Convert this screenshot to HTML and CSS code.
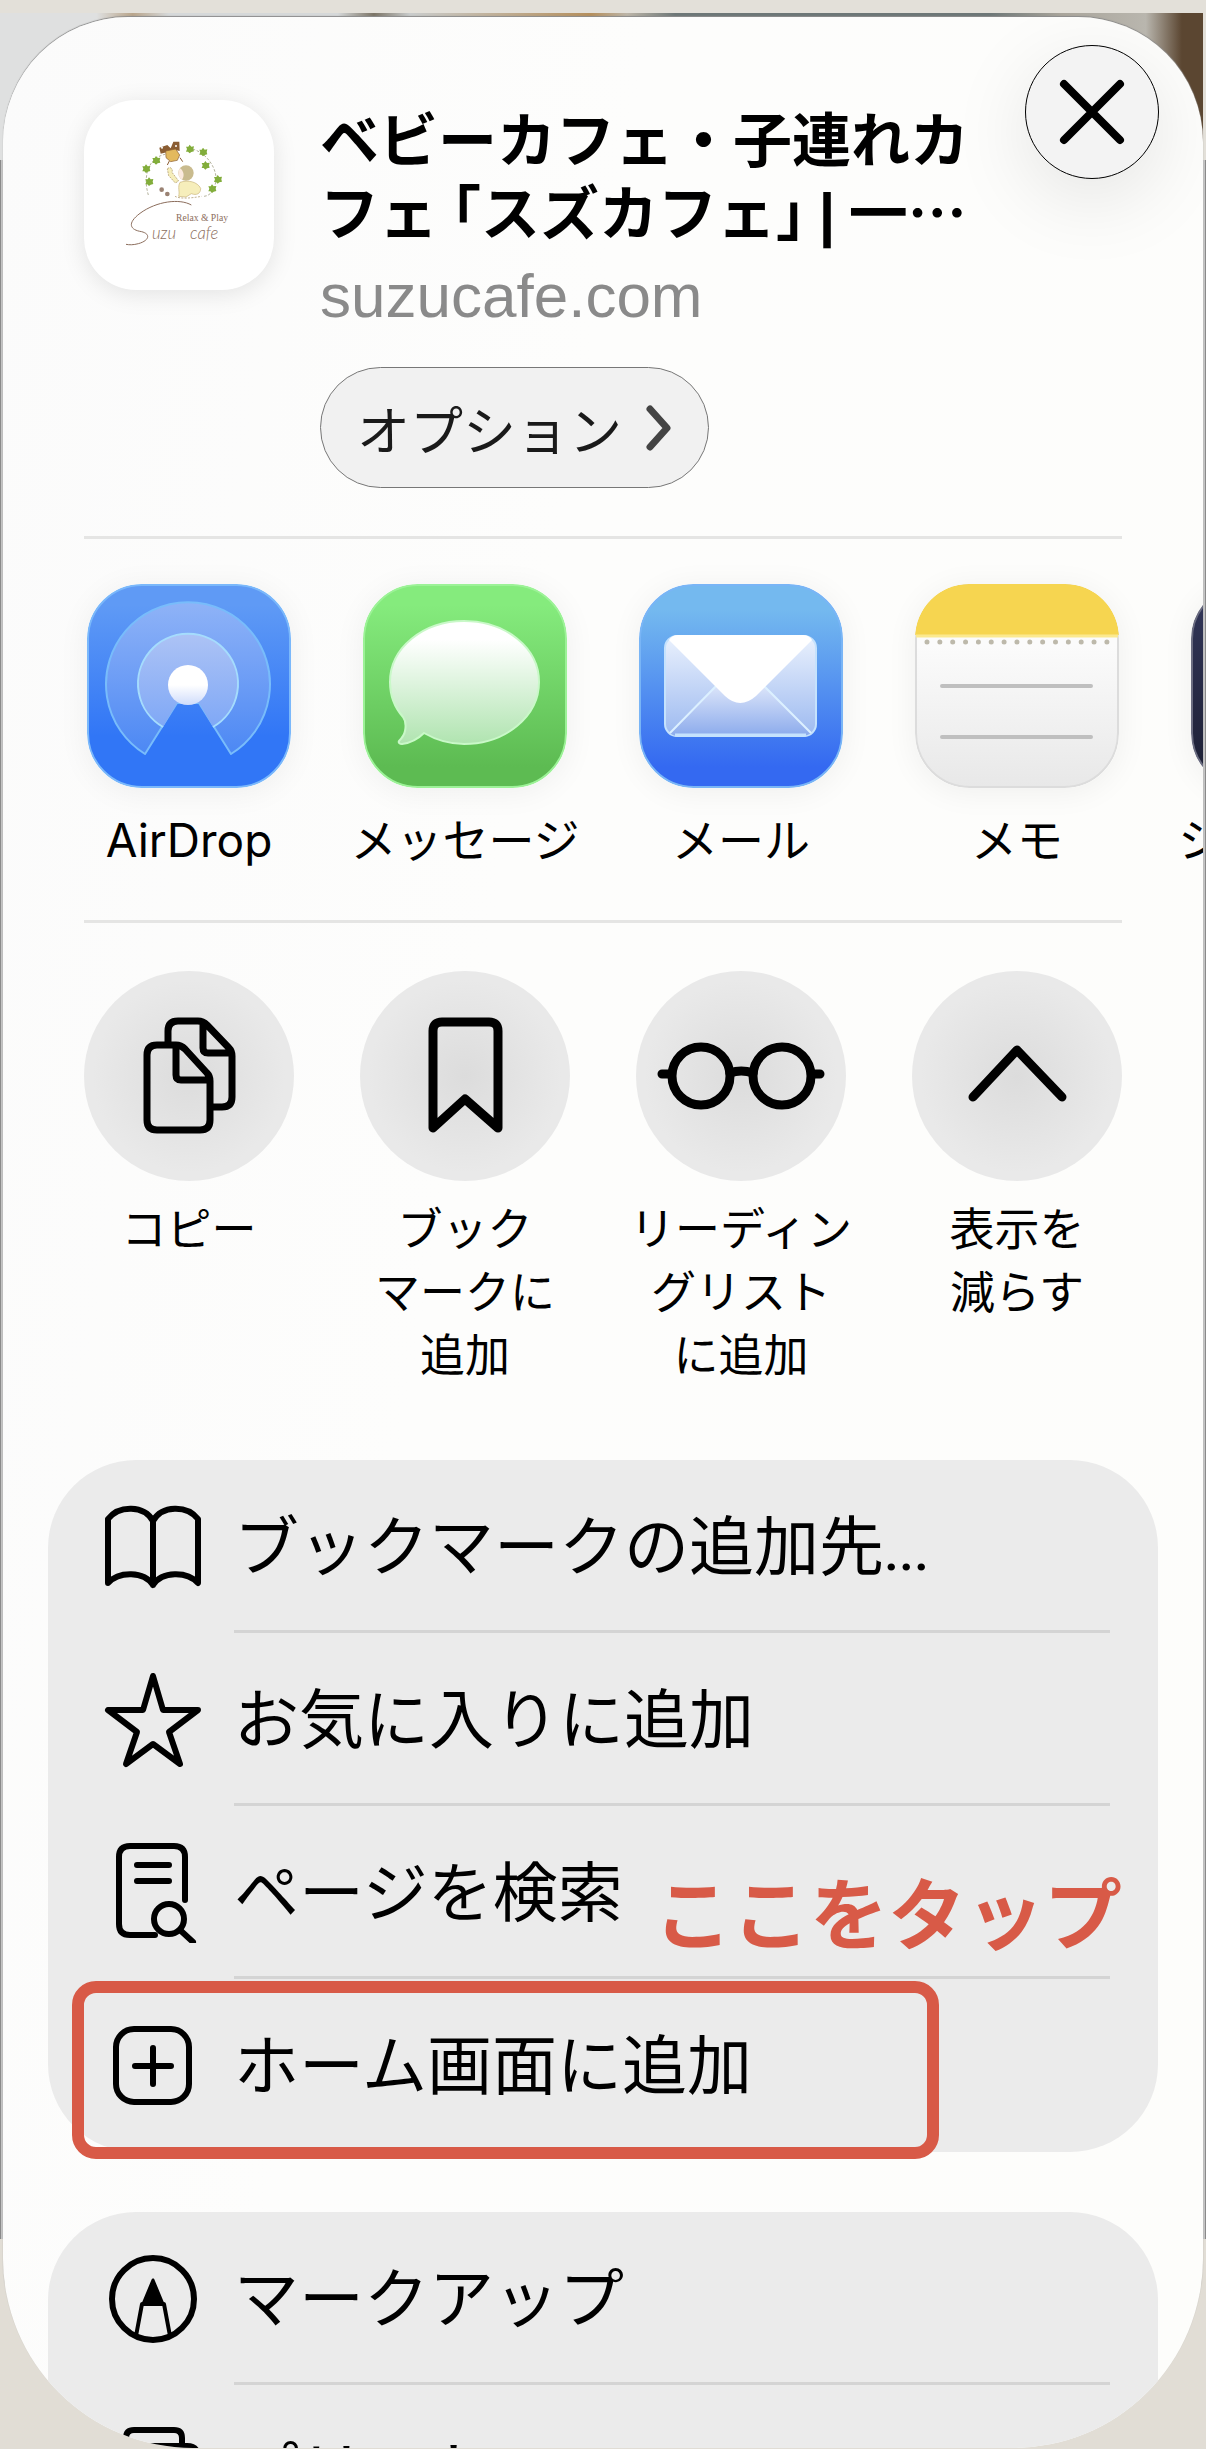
FILE: index.html
```html
<!DOCTYPE html>
<html lang="ja">
<head>
<meta charset="utf-8">
<meta name="viewport" content="width=device-width, initial-scale=1">
<title>共有</title>
<link rel="stylesheet" href="styles.css">
</head>
<body>
<main class="screen">
  <section class="sheet">
    <header class="header">
      <svg class="site-icon" viewBox="12 15 570 570" role="img" aria-label="Suzu cafe">
        <path d="M205 300C190 250 200 190 255 178M325 160C380 165 420 230 405 270C400 292 385 305 368 304" fill="none" stroke="#8d8a6a" stroke-width="2" stroke-dasharray="8 5"/>
        <g fill="#82ad3b">
          <path id="leaf" d="M-12-7L-5-7L-1-13L4-7L12-8L10 0L12 7L4 9L-1 13L-6 8L-12 8L-9 0Z" transform="translate(330 162)"/>
          <use href="#leaf" x="40" y="9"/>
          <use href="#leaf" x="47" y="49"/>
          <use href="#leaf" x="84" y="91"/>
          <use href="#leaf" x="67" y="119"/>
          <use href="#leaf" x="-101" y="34"/>
          <use href="#leaf" x="-131" y="59"/>
          <use href="#leaf" x="-122" y="98"/>
        </g>
        <path d="M238 158L262 150L272 160L280 140L298 140L299 168L286 165L260 172L242 176Z" fill="#8a5d33"/>
        <path d="M257 168L287 162L299 180L292 196L272 200L258 188Z" fill="#e3b95d" stroke="#8a5d33" stroke-width="2"/>
        <path d="M300 188l8 12M268 198l-6 12" stroke="#8a5d33" stroke-width="3"/>
        <circle cx="246" cy="158" r="3" fill="#fff"/><circle cx="288" cy="153" r="3" fill="#fff"/>
        <path d="M262 222C270 212 280 222 276 232L296 258L286 264L266 242Z" fill="#f6eebb" stroke="#a48c5c" stroke-width="2" stroke-dasharray="6 3"/>
        <circle cx="318" cy="234" r="23" fill="#c9bb8e"/>
        <path d="M300 220C292 232 294 246 306 254C314 244 312 228 300 220Z" fill="#fbeade"/>
        <path d="M300 262C324 254 352 260 362 280C362 296 350 302 334 296L318 306L296 304C300 290 292 276 300 262Z" fill="#f6eebb" stroke="#c9b478" stroke-width="2"/>
        <path d="M285 304C300 312 330 310 365 304" fill="none" stroke="#a48c5c" stroke-width="2" stroke-dasharray="6 4"/>
        <circle cx="245" cy="284" r="7" fill="#9a8273"/><circle cx="262" cy="297" r="7" fill="#9a8273"/>
        <path d="M334 330C300 310 230 318 180 355C140 385 150 405 185 410C215 418 205 438 175 446C160 450 148 450 138 448" fill="none" stroke="#8b6d5c" stroke-width="3"/>
        <text class="logo-tagline" x="288" y="378">Relax &amp; Play</text>
        <text class="logo-name" x="216" y="432">uzu</text>
        <text class="logo-name" x="330" y="432">cafe</text>
      </svg>
      <div class="site">
        <h1 class="title">ベビーカフェ・子連れカ<br>フェ <span class="bracket">「</span>スズカフェ<span class="bracket">」</span> <span class="bar">|</span> 一…</h1>
        <p class="domain">suzucafe.com</p>
        <button class="options" type="button">オプション
          <svg class="options-arrow" viewBox="0 0 30 46" aria-hidden="true"><path d="M6 4L23 23L6 42"/></svg>
        </button>
      </div>
      <button class="close" type="button" aria-label="閉じる">
        <svg viewBox="0 0 132 132" aria-hidden="true"><path d="M38 38L94 94M94 38L38 94"/></svg>
      </button>
    </header>

    <nav class="apps">
      <button class="app" type="button">
        <svg class="app-icon" viewBox="0 0 204 204" aria-hidden="true">
          <defs>
            <linearGradient id="air" x2="0" y2="1"><stop offset=".1" stop-color="#5f9af5"/><stop offset=".75" stop-color="#3176f6"/></linearGradient>
            <linearGradient id="ring" x2="0" y2="1"><stop stop-color="#8fb3f7"/><stop offset="1" stop-color="#4c88f4"/></linearGradient>
            <linearGradient id="ring2" x2="0" y2="1"><stop stop-color="#adc3f5"/><stop offset="1" stop-color="#7fa8f6"/></linearGradient>
            <linearGradient id="dot" x2="0" y2="1"><stop offset=".5" stop-color="#fff"/><stop offset="1" stop-color="#cfdcfb"/></linearGradient>
          </defs>
          <rect x="1" y="1" width="202" height="202" rx="54" fill="url(#air)" stroke="#7ab8fb" stroke-width="2"/>
          <path d="M58 170A82 82 0 1 1 144 170L112 119L90 119Z" fill="url(#ring)" stroke="#78bcfb" stroke-width="2" stroke-linejoin="round"/>
          <path d="M76 143A50 50 0 1 1 126 143L112 119L90 119Z" fill="url(#ring2)"/>
          <path d="M76 143A50 50 0 1 1 126 143" fill="none" stroke="#a5dcfd" stroke-width="2"/>
          <circle cx="101" cy="101" r="20" fill="url(#dot)"/>
        </svg>
        <span>AirDrop</span>
      </button>
      <button class="app" type="button">
        <svg class="app-icon" viewBox="0 0 204 204" aria-hidden="true">
          <defs>
            <linearGradient id="msg" x2="0" y2="1"><stop offset=".1" stop-color="#85eb7d"/><stop offset=".9" stop-color="#5dbb52"/></linearGradient>
            <linearGradient id="bubble" x2="0" y2="1"><stop offset=".15" stop-color="#fff"/><stop offset="1" stop-color="#b0e4b0"/></linearGradient>
          </defs>
          <rect x="1" y="1" width="202" height="202" rx="54" fill="url(#msg)" stroke="#9cf297" stroke-width="2"/>
          <path d="M61 149C73 156 87 160 101 160C143 160 176 132 176 98C176 64 143 37 101 37C60 37 27 64 27 98C27 112 32 124 40 133C43 137 43 142 42 147C41 152 38 155 36 157C35 159 37 160 39 160C47 159 55 155 61 149Z" fill="url(#bubble)" stroke="#c9f8c8" stroke-width="2"/>
        </svg>
        <span>メッセージ</span>
      </button>
      <button class="app" type="button">
        <svg class="app-icon" viewBox="0 0 204 204" aria-hidden="true">
          <defs>
            <linearGradient id="mail" x2="0" y2="1"><stop offset=".12" stop-color="#74b9ef"/><stop offset=".9" stop-color="#3469f1"/></linearGradient>
            <linearGradient id="side" x2="0" y2="1"><stop stop-color="#eaf1fd"/><stop offset="1" stop-color="#9dbaf0"/></linearGradient>
            <linearGradient id="base" x2="0" y2="1"><stop stop-color="#e0e8fa"/><stop offset="1" stop-color="#8cabec"/></linearGradient>
          </defs>
          <rect x="1" y="1" width="202" height="202" rx="54" fill="url(#mail)" stroke="#79b5f6" stroke-width="2"/>
          <rect class="envelope" x="26" y="52" width="151" height="100" rx="12" fill="url(#side)" stroke="#c5e2fd" stroke-width="2"/>
          <path d="M31 149L80 99L122 99L172 149Q168 152 164 152H39Q34 152 31 149Z" fill="url(#base)"/>
          <path d="M31 149L80 99M172 149L122 99" stroke="#dcf0ff" stroke-width="2"/>
          <path d="M36 151H167" stroke="#c5e2fd" stroke-width="3"/>
          <path d="M30 56Q33 51 39 51H164Q170 51 173 56L117 112Q101 126 86 112Z" fill="#fff"/>
        </svg>
        <span>メール</span>
      </button>
      <button class="app" type="button">
        <svg class="app-icon" viewBox="0 0 204 204" aria-hidden="true">
          <defs>
            <linearGradient id="paper" x2="0" y2="1"><stop offset=".3" stop-color="#fbfbfb"/><stop offset="1" stop-color="#e8e8e8"/></linearGradient>
            <clipPath id="memo"><rect width="204" height="204" rx="54"/></clipPath>
          </defs>
          <rect x="1" y="1" width="202" height="202" rx="54" fill="url(#paper)" stroke="#dcdcdc" stroke-width="2"/>
          <path d="M0 0H204V51H0Z" fill="#f6d550" clip-path="url(#memo)"/>
          <path d="M1 52H203" stroke="#fbe98f" stroke-width="3"/>
          <path d="M12 58H194" stroke="#bdb9ab" stroke-width="5" stroke-linecap="round" stroke-dasharray="0 12.85"/>
          <path d="M27 102H176M27 153H176" stroke="#bfbfbf" stroke-width="4" stroke-linecap="round"/>
        </svg>
        <span>メモ</span>
      </button>
      <button class="app app-cut" type="button">
        <svg class="app-icon" viewBox="0 0 204 204" aria-hidden="true">
          <defs><linearGradient id="dark" x2="0" y2="1"><stop stop-color="#33375a"/><stop offset="1" stop-color="#1c1f33"/></linearGradient></defs>
          <rect x="1" y="1" width="202" height="202" rx="54" fill="url(#dark)" stroke="#6a6c80" stroke-width="2"/>
        </svg>
        <span>シ</span>
      </button>
    </nav>

    <nav class="actions">
      <button class="action" type="button">
        <svg class="action-icon" viewBox="0 0 210 210" aria-hidden="true">
          <path d="M84 72V60Q84 50 94 50H114Q119 50 123 54L145 77Q148 80 148 85V126Q148 136 138 136H128M119 52V77Q119 82 124 82H147"/>
          <path d="M73 74H92Q97 74 101 78L123 102Q126 105 126 110V149Q126 159 116 159H73Q63 159 63 149V84Q63 74 73 74ZM92 75V104Q92 109 97 109H125"/>
        </svg>
        <span>コピー</span>
      </button>
      <button class="action" type="button">
        <svg class="action-icon bold" viewBox="0 0 210 210" aria-hidden="true"><path d="M73 157V60Q73 51 82 51H129Q138 51 138 60V157L105 128Z"/></svg>
        <span>ブック<br>マークに<br>追加</span>
      </button>
      <button class="action" type="button">
        <svg class="action-icon bold" viewBox="0 0 210 210" aria-hidden="true"><circle cx="65" cy="105" r="29"/><circle cx="146" cy="105" r="29"/><path d="M94 102Q105 98 117 102M26 103H35M176 103H184"/></svg>
        <span>リーディン<br>グリスト<br>に追加</span>
      </button>
      <button class="action" type="button">
        <svg class="action-icon bold" viewBox="0 0 210 210" aria-hidden="true"><path d="M61 126L105 79L150 126"/></svg>
        <span>表示を<br>減らす</span>
      </button>
    </nav>

    <ul class="card">
      <li><button class="row" type="button">
        <svg class="row-icon" viewBox="0 0 100 100" aria-hidden="true"><path d="M50 24C41 8 16 8 5 22V86C16 74 41 74 50 88C59 74 84 74 95 86V22C84 8 59 8 50 24V88"/></svg>
        <span class="row-label">ブックマークの追加先<span class="dots">...</span></span>
      </button></li>
      <li><button class="row" type="button">
        <svg class="row-icon" viewBox="0 0 100 100" aria-hidden="true"><path d="M50 6L60 40H95L66 62L77 94L50 74L23 94L34 62L5 40H40Z"/></svg>
        <span class="row-label">お気に入りに追加</span>
      </button></li>
      <li><button class="row" type="button">
        <svg class="row-icon" viewBox="0 0 100 100" aria-hidden="true"><path d="M52 92H27Q16 92 16 81V14Q16 3 27 3H71Q82 3 82 14V57M34 22H66M34 38H66"/><circle cx="66" cy="76" r="15"/><path d="M77 87L90 99"/></svg>
        <span class="row-label">ページを検索</span>
      </button>
      <strong class="callout">ここをタップ</strong></li>
      <li><button class="row" type="button">
        <svg class="row-icon" viewBox="0 0 100 100" aria-hidden="true"><rect x="13" y="13" width="73" height="73" rx="18"/><path d="M50 32V68M32 50H68"/></svg>
        <span class="row-label">ホーム画面に追加</span>
      </button>
      <span class="highlight"></span></li>
    </ul>

    <ul class="card">
      <li><button class="row" type="button">
        <svg class="row-icon" viewBox="0 0 100 100" aria-hidden="true"><circle cx="50" cy="50" r="41"/><path d="M33 87L39 55H61L67 87" stroke-width="4"/><path d="M50 31L60 55H40Z" fill="#000" stroke-width="3"/></svg>
        <span class="row-label">マークアップ</span>
      </button></li>
      <li><button class="row" type="button">
        <svg class="row-icon" viewBox="0 0 100 100" aria-hidden="true"><path d="M23 24V16Q23 8 31 8H71Q79 8 79 16V24M20 24H84Q95 24 95 36V64H80M20 24Q5 24 5 36V64H20M24 48H76V88H24Z"/></svg>
        <span class="row-label">プリント</span>
      </button></li>
    </ul>
  </section>
</main>
</body>
</html>
```
FILE: styles.css
```css
* {
  box-sizing: border-box;
}

body {
  margin: 0;
  background: #e1ddd5;
  color: #000;
  font-family: Inter, "Noto Sans CJK JP", sans-serif;
}

button {
  padding: 0;
  border: 0;
  background: none;
  color: inherit;
  font: inherit;
}

svg {
  display: block;
  flex: none;
}

.screen {
  height: 100vh;
  padding: 17px 3px 1px;
  overflow: hidden;
  background:
    linear-gradient(#e3e0d9, #e3e0d9) 0 0 / 100% 13px no-repeat,
    linear-gradient(#e3e0d9, #e3e0d9) 100% 0 / 3px 160px no-repeat,
    linear-gradient(90deg, #dfe0e0 8%, #b9a58b 11%, #d5d8d9 14%, #d5d8d9 28%, #7b7466 31%, #c9cccc 34%, #b58f5c 49%, #bcb5a8 52%, #6d7777 56%, #6d7777 82%, #a9a59b 88%, #b9b6ae 95%, #5b4631 98%) 0 0 / 100% 160px no-repeat,
    linear-gradient(90deg, #8a8a8a 1px, #c4c4c4 1px 3px, transparent 3px calc(100% - 3px), #c4c4c4 calc(100% - 3px) calc(100% - 1px), #8a8a8a calc(100% - 1px)) 0 160px / 100% calc(100% - 370px) no-repeat,
    #e1ddd5;
}

.sheet {
  position: relative;
  height: 100%;
  overflow: hidden;
  border-radius: 125px 125px 190px 190px;
  background: linear-gradient(100deg, #fbfbfb, #fdfdfc 40%, #fdfdfb);
  box-shadow: 0 -1px 1px #8c8c8c;
}

.header {
  display: flex;
  gap: 46px;
  margin: 0 81px;
  padding: 83px 0 48px;
  border-bottom: 3px solid #e5e5e4;
}

.site-icon {
  width: 190px;
  height: 190px;
  border-radius: 52px;
  background: #fff;
  box-shadow: 0 4px 24px rgba(0, 0, 0, 0.1);
}

.logo-tagline {
  fill: #8b6d5c;
  font: 29px "Liberation Serif", serif;
}

.logo-name {
  fill: #8b6d5c;
  font: italic 300 50px Lato, sans-serif;
}

.title {
  margin: 0;
  font-family: "Noto Sans CJK JP", sans-serif;
  font-size: 59px;
  font-weight: 700;
  line-height: 73px;
  white-space: nowrap;
}

.bracket {
  font-feature-settings: "halt";
}

.bar {
  font-family: "Liberation Sans", sans-serif;
  line-height: 1;
}

.domain {
  margin: 10px 0 31px;
  color: #8a8a8a;
  font-family: "Liberation Sans", sans-serif;
  font-size: 62px;
  line-height: 80px;
}

.options {
  display: flex;
  align-items: center;
  gap: 22px;
  height: 121px;
  padding: 0 34px 0 36px;
  border: 1px solid #777;
  border-radius: 61px;
  background: #f1f1f1;
  color: #1a1a1a;
  font-size: 53px;
}

.options-arrow {
  width: 30px;
  height: 46px;
  fill: none;
  stroke: #444;
  stroke-width: 7;
  stroke-linecap: round;
  stroke-linejoin: round;
}

.close {
  position: absolute;
  top: 28px;
  right: 44px;
  width: 134px;
  height: 134px;
  border: 1px solid #000;
  border-radius: 50%;
  background: #f3f3f3;
  box-shadow: 0 20px 80px rgba(0, 0, 0, 0.1);
}

.close svg {
  fill: none;
  stroke: #000;
  stroke-width: 8;
  stroke-linecap: round;
}

.apps {
  display: flex;
  gap: 46px;
  padding: 45px 0 48px 71px;
  overflow: hidden;
}

.app,
.action {
  display: flex;
  flex: none;
  flex-direction: column;
  align-items: center;
  width: 230px;
  font-size: 46px;
  line-height: 63px;
  white-space: nowrap;
}

.app {
  gap: 21px;
}

.app-icon {
  width: 204px;
  height: 204px;
  border-radius: 54px;
  box-shadow: 0 4px 32px rgba(0, 0, 0, 0.06);
}

.app-cut span {
  align-self: flex-start;
}

.actions {
  position: relative;
  display: flex;
  justify-content: space-between;
  padding: 51px 71px 73px;
}

.actions::before {
  position: absolute;
  top: 0;
  right: 81px;
  left: 81px;
  height: 3px;
  background: #e5e5e4;
  content: "";
}

.action {
  gap: 17px;
  font-size: 45px;
}

.action-icon {
  width: 210px;
  height: 210px;
  border-radius: 50%;
  background: radial-gradient(#dcdcdc, #e9e9e9 65%);
  fill: none;
  stroke: #000;
  stroke-width: 7;
  stroke-linecap: round;
  stroke-linejoin: round;
}

.action-icon.bold {
  stroke-width: 9;
}

.card {
  margin: 0 45px 60px;
  padding: 0;
  border-radius: 88px;
  background: #ebebeb;
  list-style: none;
}

.card li {
  position: relative;
}

.row {
  display: flex;
  align-items: center;
  gap: 31px;
  width: 100%;
  height: 173px;
  padding: 0 48px 0 55px;
  font-size: 65px;
  text-align: left;
  white-space: nowrap;
}

.row-icon {
  width: 100px;
  height: 100px;
  fill: none;
  stroke: #000;
  stroke-width: 6;
  stroke-linecap: round;
  stroke-linejoin: round;
}

.row-label {
  flex: 1;
  height: 100%;
  border-bottom: 3px solid #d4d4d4;
  line-height: 174px;
}

.dots {
  font-family: Roboto, sans-serif;
  font-size: 54px;
  font-weight: 500;
  line-height: 1;
}

.card li:last-child .row-label {
  border-bottom-color: transparent;
}

.callout {
  position: absolute;
  right: 36px;
  bottom: 3px;
  z-index: 1;
  color: #d85a47;
  font-size: 78px;
  font-weight: 700;
  line-height: 120px;
}

.highlight {
  position: absolute;
  inset: 2px 219px -7px 24px;
  border: 12px solid #d85a47;
  border-radius: 24px;
}
```
